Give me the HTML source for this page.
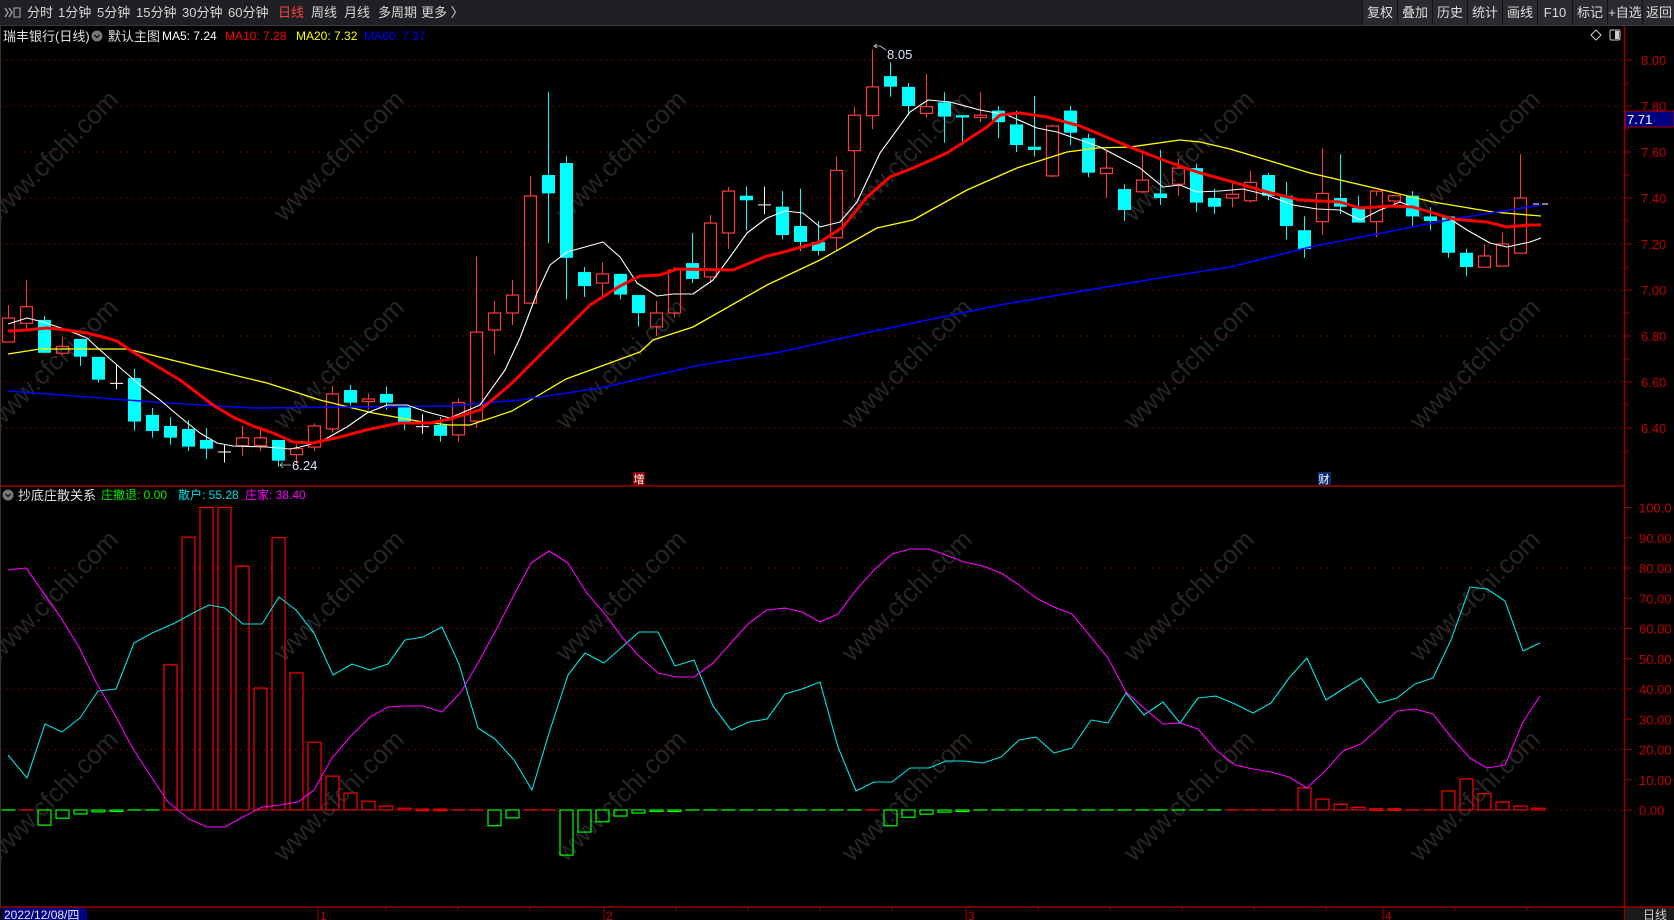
<!DOCTYPE html>
<html><head><meta charset="utf-8">
<style>
html,body{margin:0;padding:0;background:#000;width:1674px;height:920px;overflow:hidden;font-family:"Liberation Sans","Noto Sans CJK SC",sans-serif;}
#tb{position:absolute;left:0;top:0;width:1674px;height:25px;background:#1f2023;border-bottom:1px solid #3a3b3e;}
.ti{position:absolute;top:5px;font-size:13px;color:#d6d6d6;line-height:15px;white-space:nowrap;}
.bt{position:absolute;top:0;height:25px;width:34px;background:#2a2b2f;border-left:1px solid #111;color:#dcdcdc;font-size:13px;line-height:25px;text-align:center;white-space:nowrap;}
.hd{position:absolute;font-size:12px;line-height:15px;white-space:nowrap;}
svg{position:absolute;left:0;top:0;}
</style></head><body>
<svg id="s" width="1674" height="920" xmlns="http://www.w3.org/2000/svg"></svg>
<div id="tb">
<svg width="22" height="25" style="position:absolute;left:2px;top:0"><path d="M3 8 L6 12.5 L3 17 M7 8 L10 12.5 L7 17" stroke="#aaa" fill="none" stroke-width="1.2"/><rect x="12" y="8" width="6" height="9" stroke="#aaa" fill="none"/></svg>
<span class="ti" style="left:27px">分时</span>
<span class="ti" style="left:58px">1分钟</span>
<span class="ti" style="left:97px">5分钟</span>
<span class="ti" style="left:136px">15分钟</span>
<span class="ti" style="left:182px">30分钟</span>
<span class="ti" style="left:228px">60分钟</span>
<span class="ti" style="left:278px;color:#ff3c3c">日线</span>
<span class="ti" style="left:311px">周线</span>
<span class="ti" style="left:344px">月线</span>
<span class="ti" style="left:378px">多周期</span>
<span class="ti" style="left:421px">更多 〉</span>
<span class="bt" style="left:1362px">复权</span>
<span class="bt" style="left:1397px">叠加</span>
<span class="bt" style="left:1432px">历史</span>
<span class="bt" style="left:1467px">统计</span>
<span class="bt" style="left:1502px">画线</span>
<span class="bt" style="left:1537px">F10</span>
<span class="bt" style="left:1572px">标记</span>
<span class="bt" style="left:1607px">+自选</span>
<span class="bt" style="left:1642px;width:32px">返回</span>
</div>
<span class="hd" style="left:3px;top:29px;color:#e0e0e0;font-size:13px">瑞丰银行(日线)</span>
<span class="hd" style="left:108px;top:29px;color:#e0e0e0;font-size:13px">默认主图</span>
<span class="hd" style="left:162px;top:29px;color:#ffffff">MA5: 7.24</span>
<span class="hd" style="left:225px;top:29px;color:#ff0000">MA10: 7.28</span>
<span class="hd" style="left:296px;top:29px;color:#ffff00">MA20: 7.32</span>
<span class="hd" style="left:364px;top:29px;color:#0000ff">MA60: 7.37</span>
<span class="hd" style="left:18px;top:488px;color:#e0e0e0;font-size:13px">抄底庄散关系</span>
<span class="hd" style="left:101px;top:488px;color:#00ee00">庄撤退: 0.00</span>
<span class="hd" style="left:178px;top:488px;color:#00e0e0">散户: 55.28</span>
<span class="hd" style="left:245px;top:488px;color:#ff00ff">庄家: 38.40</span>
<script>
let h='';
const X=i=>8.5+18*i, PY=p=>60+(8-p)*230, IY=v=>810-v*3.025;
[157,365,597,797].forEach(y=>[54,340,622,908,1190,1476].forEach(x=>{
 h+=`<text x="${x}" y="${y}" transform="rotate(-45 ${x} ${y})" text-anchor="middle" dominant-baseline="middle" font-size="26" fill="#262626" font-family="Liberation Sans,sans-serif">www.cfchi.com</text>`;}));
for(let k=0;k<9;k++){let y=60+k*46;h+=`<line x1="0" y1="${y}" x2="1624" y2="${y}" stroke="#8a0000" stroke-dasharray="1.5 4.5"/>`;
 h+=`<line x1="1624" y1="${y}" x2="1632" y2="${y}" stroke="#8a0000"/><line x1="1624" y1="${y+23}" x2="1629" y2="${y+23}" stroke="#8a0000"/>`;
 h+=`<text x="1641" y="${y+5}" font-size="13" fill="#c00000">${(8-k*0.2).toFixed(2)}</text>`;}
for(let k=0;k<=10;k++){let v=k*10,y=IY(v);
 if(k%2==0&&k<10)h+=`<line x1="0" y1="${y}" x2="1624" y2="${y}" stroke="#8a0000" stroke-dasharray="1.5 4.5"/>`;
 h+=`<line x1="1624" y1="${y}" x2="1632" y2="${y}" stroke="#8a0000"/>`;
 h+=`<text x="1639" y="${y+5}" font-size="13" fill="#c00000">${v==100?'100.0':v.toFixed(2)}</text>`;}
h+=`<line x1="1624.5" y1="26" x2="1624.5" y2="920" stroke="#9a0000" stroke-width="1.5"/>`;
h+=`<line x1="0" y1="486" x2="1624" y2="486" stroke="#9a0000" stroke-width="1.5"/>`;
h+=`<line x1="0" y1="907" x2="1674" y2="907" stroke="#9a0000" stroke-width="1.5"/>`;
h+=`<line x1="0.5" y1="26" x2="0.5" y2="907" stroke="#333"/>`;
const D=[[6.774,6.935,6.774,6.878],[6.855,7.043,6.826,6.927],[6.870,6.887,6.727,6.727],[6.725,6.797,6.717,6.755],[6.787,6.787,6.670,6.710],[6.709,6.709,6.597,6.610],[6.594,6.678,6.569,6.594],[6.617,6.657,6.388,6.428],[6.457,6.487,6.358,6.387],[6.409,6.448,6.327,6.358],[6.396,6.435,6.300,6.319],[6.348,6.40,6.265,6.310],[6.296,6.33,6.25,6.296],[6.323,6.41,6.28,6.357],[6.323,6.40,6.30,6.357],[6.348,6.348,6.232,6.258],[6.284,6.33,6.24,6.31],[6.317,6.42,6.30,6.409],[6.396,6.583,6.38,6.548],[6.565,6.587,6.497,6.51],[6.515,6.55,6.48,6.526],[6.548,6.58,6.48,6.51],[6.49,6.49,6.39,6.42],[6.406,6.46,6.375,6.406],[6.413,6.448,6.34,6.366],[6.37,6.53,6.34,6.51],[6.43,7.145,6.40,6.817],[6.826,6.952,6.72,6.90],[6.90,7.043,6.848,6.978],[6.943,7.496,6.943,7.409],[7.50,7.862,7.204,7.42],[7.552,7.583,6.96,7.14],[7.078,7.10,6.97,7.017],[7.03,7.12,6.97,7.07],[7.07,7.07,6.96,6.98],[6.978,6.978,6.84,6.90],[6.84,6.952,6.80,6.90],[6.90,7.10,6.88,7.087],[7.117,7.248,7.03,7.048],[7.057,7.326,7.03,7.291],[7.248,7.448,7.178,7.43],[7.41,7.45,7.26,7.39],[7.37,7.45,7.33,7.37],[7.362,7.43,7.22,7.239],[7.278,7.44,7.17,7.209],[7.209,7.30,7.15,7.17],[7.227,7.58,7.17,7.52],[7.606,7.797,7.40,7.76],[7.758,8.046,7.70,7.883],[7.93,7.99,7.84,7.884],[7.883,7.90,7.76,7.80],[7.768,7.94,7.75,7.797],[7.816,7.86,7.64,7.754],[7.76,7.76,7.63,7.75],[7.75,7.86,7.73,7.76],[7.78,7.80,7.66,7.73],[7.72,7.78,7.60,7.63],[7.623,7.843,7.58,7.609],[7.496,7.72,7.49,7.713],[7.78,7.80,7.63,7.684],[7.66,7.68,7.49,7.51],[7.506,7.61,7.40,7.53],[7.439,7.46,7.30,7.348],[7.427,7.61,7.42,7.478],[7.42,7.61,7.37,7.40],[7.46,7.57,7.41,7.53],[7.53,7.55,7.34,7.38],[7.40,7.44,7.33,7.362],[7.40,7.47,7.36,7.416],[7.388,7.52,7.38,7.468],[7.50,7.51,7.39,7.41],[7.41,7.47,7.22,7.278],[7.26,7.32,7.14,7.178],[7.297,7.616,7.24,7.42],[7.40,7.59,7.33,7.362],[7.357,7.41,7.30,7.293],[7.297,7.41,7.23,7.43],[7.387,7.41,7.36,7.41],[7.41,7.43,7.28,7.32],[7.32,7.36,7.26,7.30],[7.32,7.32,7.14,7.162],[7.162,7.18,7.06,7.10],[7.099,7.20,7.099,7.148],[7.104,7.25,7.104,7.20],[7.16,7.59,7.16,7.40]];
D.forEach((d,i)=>{let [o,hi,lo,c]=d,x=X(i),yo=PY(o),yc=PY(c),yh=PY(hi),yl=PY(lo);
 if(Math.abs(o-c)<0.001){h+=`<line x1="${x}" y1="${yh}" x2="${x}" y2="${yl}" stroke="#fff"/><line x1="${x-6.5}" y1="${yo}" x2="${x+6.5}" y2="${yo}" stroke="#fff"/>`;}
 else if(c>o){h+=`<line x1="${x}" y1="${yh}" x2="${x}" y2="${yc}" stroke="#ff3c3c"/><line x1="${x}" y1="${yo}" x2="${x}" y2="${yl}" stroke="#ff3c3c"/><rect x="${x-6}" y="${yc}" width="12" height="${Math.max(yo-yc,1)}" fill="none" stroke="#ff3c3c" stroke-width="1.2"/>`;}
 else{h+=`<line x1="${x}" y1="${yh}" x2="${x}" y2="${yl}" stroke="#00ffff"/><rect x="${x-6.5}" y="${yo}" width="13" height="${Math.max(yc-yo,2)}" fill="#00ffff"/>`;}
});
h+=`<line x1="1533" y1="204" x2="1539" y2="204" stroke="#fff"/><line x1="1542" y1="204" x2="1548" y2="204" stroke="#fff"/>`;
const pl=(pts,col,w)=>{h+=`<polyline points="${pts}" fill="none" stroke="${col}" stroke-width="${w}" stroke-linejoin="round"/>`;};
pl("8,354 40,349 127,349 200,367 267,383 320,400 373,413 423,422 450,425 470,425 512,411 566,379 640,352 653,340 693,327 767,285 820,260 877,228 913,220 967,190 1017,168 1067,152 1097,148 1130,147 1180,140 1200,142 1230,149 1267,160 1310,173 1383,190 1433,202 1493,212 1541,216","#ffff00",1.3);
pl("8,391 87,397 167,403 253,408 350,407 450,406 520,400 600,388 700,365 780,352 843,338 870,332 1000,305 1153,279 1230,267 1310,247 1453,219 1541,205","#0000ff",1.6);
pl("8,324 27,318 43,322 67,330 87,338 100,350 117,365 140,385 160,400 180,417 200,433 217,443 233,446 267,447 290,449 300,447 320,442 347,427 367,413 387,405 407,405 427,412 450,418 480,405 505,370 520,338 537,293 550,265 567,252 603,242 620,257 637,283 657,296 673,294 693,294 713,280 730,257 747,233 767,218 785,211 803,213 820,227 840,222 857,202 880,153 910,112 928,100 950,102 980,110 1007,115 1037,128 1057,132 1080,140 1100,147 1140,168 1163,187 1180,185 1197,192 1220,191 1243,189 1267,195 1293,205 1317,209 1340,210 1360,220 1380,210 1400,202 1420,210 1447,217 1467,230 1490,243 1507,247 1530,242 1541,238","#ffffff",1.1);
pl("8,331 27,330 47,328 67,330 87,333 107,338 117,341 133,352 160,368 180,380 200,395 213,405 233,417 253,426 273,433 293,442 313,443 340,437 370,429 400,423 430,423 450,419 480,410 510,385 540,355 560,335 590,305 620,286 640,276 660,275 677,269 733,270 767,256 780,253 820,242 843,227 867,197 890,177 913,168 947,153 967,140 987,127 1000,115 1020,113 1047,117 1080,126 1130,147 1163,160 1197,172 1233,182 1267,192 1300,200 1340,202 1360,208 1393,206 1413,207 1453,219 1487,222 1507,227 1530,225 1541,225","#ff0000",3);
h+=`<path d="M874 46 L880 46 M874 46 L877 44 M874 46 L877 48 M880 46 L886 50" stroke="#ccc" fill="none" stroke-width="0.8"/><text x="887" y="59" font-size="13" fill="#dde6ff">8.05</text>`;
h+=`<path d="M280 465 L291 465 M280 465 L283 462 M280 465 L283 468" stroke="#ccc" fill="none" stroke-width="0.8"/><text x="292" y="470" font-size="13" fill="#dde6ff">6.24</text>`;
h+=`<rect x="1625" y="111" width="49" height="16" fill="#000080" stroke="#b00000"/><text x="1627" y="124" font-size="13" fill="#fff">7.71</text>`;
h+=`<rect x="633" y="472" width="12" height="13" fill="#8b0000"/><text x="633.5" y="483" font-size="11" fill="#fff">增</text>`;
h+=`<rect x="1318" y="472" width="13" height="13" fill="#0a2a70"/><text x="1318.5" y="483" font-size="11" fill="#fff">财</text>`;
h+=`<path d="M1596 30 L1601 35 L1596 40 L1591 35 Z" stroke="#ccc" fill="none"/><rect x="1610" y="30" width="10" height="10" rx="1.5" stroke="#ccc" fill="none"/><rect x="1615" y="31" width="4" height="8" fill="#ccc"/>`;
h+=`<circle cx="97" cy="36" r="5.5" fill="#777"/><path d="M94.5 35 L97 37.5 L99.5 35" stroke="#111" fill="none" stroke-width="1.3"/>`;
h+=`<circle cx="8" cy="495" r="5.5" fill="#777"/><path d="M5.5 494 L8 496.5 L10.5 494" stroke="#111" fill="none" stroke-width="1.3"/>`;
const B=[0,0,-5,-2.7,-1.3,-0.6,-0.3,0,0,48,90.2,100,100,80.6,40.3,90,45.3,22.4,11.2,5.6,2.9,1.3,0.6,0.3,0.3,0,0,-5.2,-2.6,0,0,-14.9,-7.3,-3.9,-2,-1,-0.3,-0.3,0,0,0,0,0,0,0,0,0,0,0,-5.2,-2.4,-1.4,-0.7,-0.3,0,0,0,0,0,0,0,0,0,0,0,0,0,0,0,0,0,0,7.3,3.6,1.9,0.9,0.4,0.4,0,0,6.3,10.3,5.4,2.6,1.3,0.6];
const RED=new Set([1,29,30,48]);for(let i=9;i<=26;i++)RED.add(i);for(let i=68;i<=85;i++)RED.add(i);
B.forEach((v,i)=>{let x=X(i),y0=IY(0);let col=v>0?'#ff0000':(v<0?'#00ff00':(RED.has(i)?'#ff0000':'#00ff00'));
 if(v==0){h+=`<line x1="${x-7}" y1="${y0}" x2="${x+7}" y2="${y0}" stroke="${col}" stroke-width="1.3"/>`;}
 else{let y=IY(v);let t=Math.min(y,y0),hh=Math.max(Math.abs(y-y0),1.5);h+=`<rect x="${x-6.5}" y="${t}" width="13" height="${hh}" fill="none" stroke="${col}" stroke-width="1.2"/>`;}
});
pl("8,755 27,778 45,724 62,732 80,718 98,691 116,689 134,643 152,633 175,623 193,613 209,605 225,608 243,624 262,624 279,597 296,610 314,633 333,675 352,664 370,670 388,664 405,640 423,637 442,627 459,664 478,728 495,739 514,760 532,790 550,730 568,675 585,653 604,663 621,648 639,632 658,632 675,666 694,660 713,706 731,730 749,722 767,719 785,694 802,689 820,682 838,747 856,791 874,782 892,782 910,768 929,768 946,761 964,761 983,763 1001,757 1019,740 1036,737 1054,753 1072,748 1091,720 1108,723 1126,693 1144,715 1163,702 1180,723 1198,698 1216,696 1235,704 1253,713 1271,703 1289,678 1307,658 1326,700 1343,689 1361,678 1379,703 1397,698 1415,684 1433,678 1451,640 1470,587 1487,589 1505,601 1523,651 1540,643","#00e5e5",1.1);
pl("8,570 26,568 43,592 61,618 79,647 96,682 114,713 132,747 150,775 168,802 189,819 207,827 225,827 243,817 262,807 280,805 298,802 314,790 332,758 350,737 370,717 388,707 405,706 423,706 442,712 461,692 478,663 496,630 514,595 531,563 549,551 568,563 586,592 604,613 622,637 638,655 658,673 676,677 694,677 713,663 731,643 749,623 767,610 785,608 802,612 820,622 838,614 856,590 874,570 892,554 910,549 929,549 946,555 964,562 983,566 1001,573 1019,585 1036,598 1054,607 1072,614 1091,637 1108,658 1126,692 1144,708 1163,724 1180,723 1198,729 1216,750 1235,765 1253,769 1271,772 1289,777 1307,788 1326,770 1343,751 1361,744 1379,728 1397,711 1415,709 1433,714 1451,737 1470,758 1487,768 1505,765 1523,722 1540,696","#ff00ff",1.1);
h+=`<rect x="1625" y="908" width="49" height="12" fill="#1a1a1a"/>`;
h+=`<rect x="3" y="908" width="84" height="12" fill="#000080"/><text x="4" y="919" font-size="12" fill="#e8e8ff">2022/12/08/四</text>`;
[[318,'1'],[604,'2'],[966,'3'],[1383,'4']].forEach(([x,t])=>{h+=`<line x1="${x}" y1="907" x2="${x}" y2="920" stroke="#9a0000"/><text x="${x+2}" y="920" font-size="12" fill="#c00000">${t}</text>`;});
[386,458,530,676,748,820,892,1038,1110,1182,1254,1326,1455,1527].forEach(x=>{h+=`<line x1="${x}" y1="907" x2="${x}" y2="911" stroke="#9a0000"/>`;});
h+=`<text x="1643" y="919" font-size="12" fill="#cccccc">日线</text>`;
document.getElementById('s').innerHTML=h;
</script>
</body></html>
